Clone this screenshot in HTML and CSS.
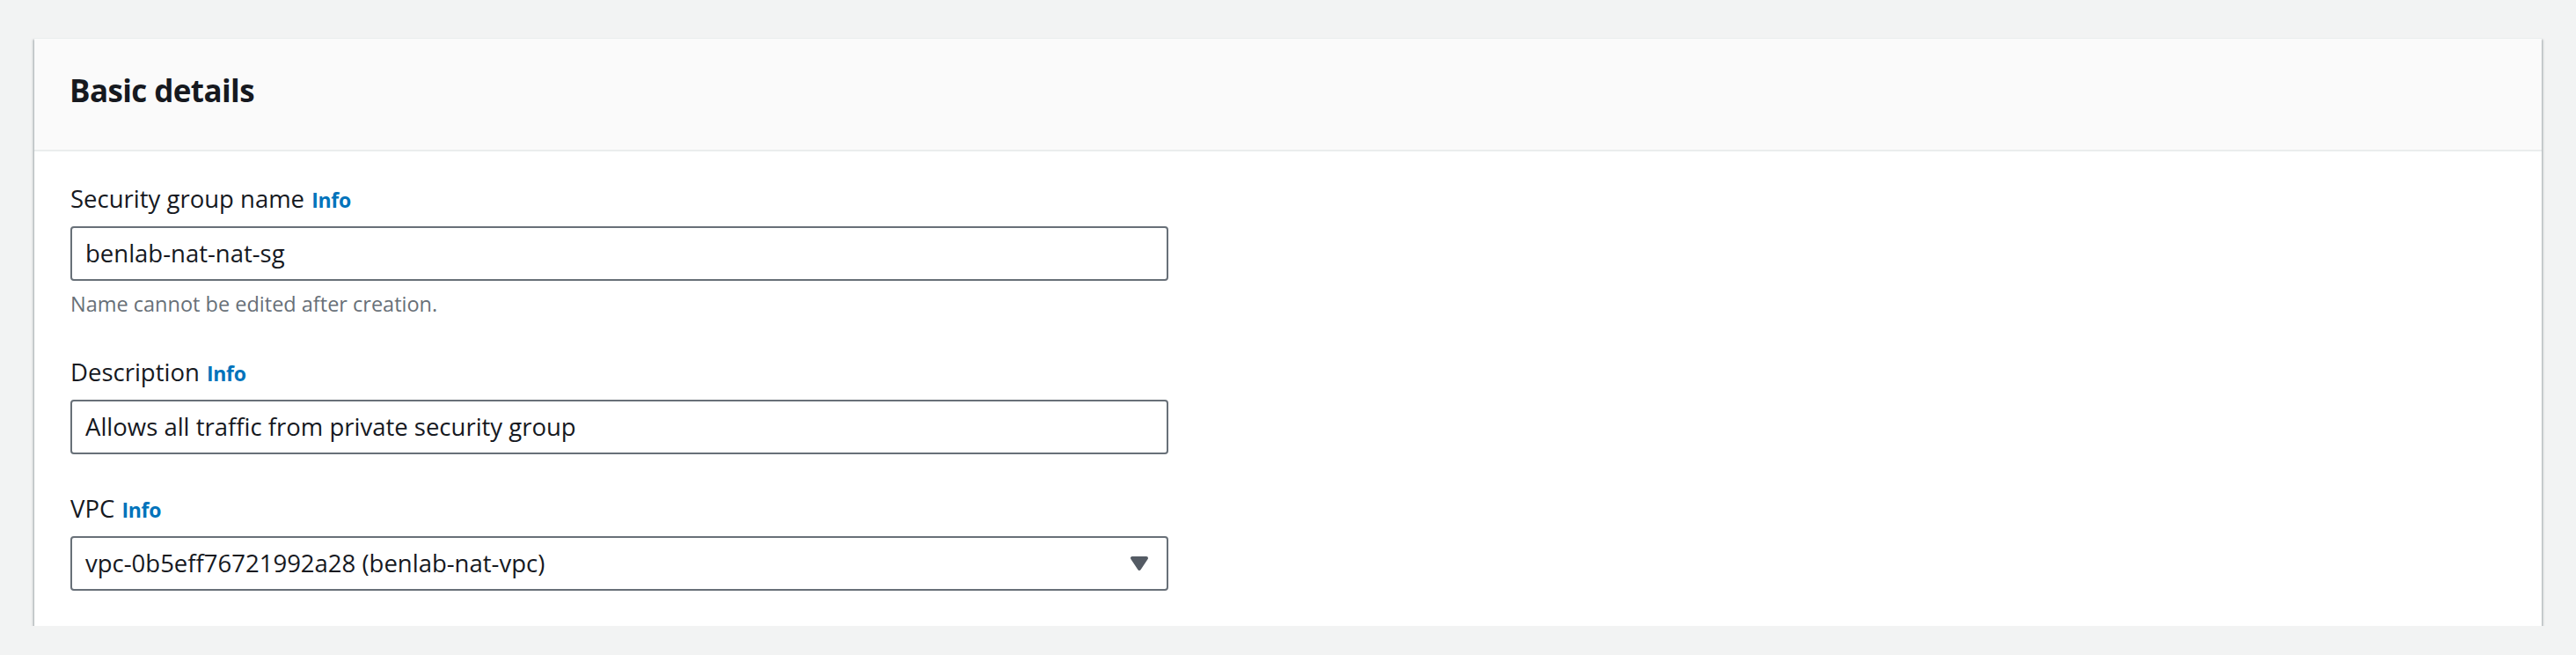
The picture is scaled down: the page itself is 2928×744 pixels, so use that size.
FILE: index.html
```html
<!DOCTYPE html>
<html lang="en">
<head>
<meta charset="utf-8">
<title>Basic details</title>
<link rel="stylesheet" href="styles.css">
</head>
<body>
<div class="page">
  <section class="card">
    <header class="card-header">
      <h2 class="card-title">Basic details</h2>
    </header>
    <div class="card-body">
      <div class="field">
        <div class="label">Security group name <a class="info" href="#">Info</a></div>
        <div class="control">benlab-nat-nat-sg</div>
        <div class="hint">Name cannot be edited after creation.</div>
      </div>
      <div class="field">
        <div class="label">Description <a class="info" href="#">Info</a></div>
        <div class="control">Allows all traffic from private security group</div>
      </div>
      <div class="field">
        <div class="label">VPC <a class="info" href="#">Info</a></div>
        <div class="control select">
          <span class="select-value">vpc-0b5eff76721992a28 (benlab-nat-vpc)</span>
          <svg class="caret" width="32" height="32" viewBox="0 0 16 16" aria-hidden="true"><path d="M4 5h8l-4 6-4-6z" fill="#545b64" stroke="#545b64" stroke-width="2" stroke-linejoin="round"/></svg>
        </div>
      </div>
    </div>
  </section>
</div>
</body>
</html>
```
FILE: styles.css
```css
html, body {
  margin: 0;
  padding: 0;
  background: #f2f3f3;
}
body {
  font-family: "Open Sans", "Noto Sans", sans-serif;
  color: #16191f;
}
.page {
  padding: 43px 39px 0 39px;
}
.card {
  background: #ffffff;
  border-top: 1px solid #eaeded;
  box-shadow: 0 2px 2px 0 rgba(0, 28, 36, 0.35), 2px 2px 2px 0 rgba(0, 28, 36, 0.15), -2px 2px 2px 0 rgba(0, 28, 36, 0.15);
}
.card-header {
  background: #fafafa;
  padding: 37px 40px 45px 40px;
  border-bottom: 2px solid #eaeded;
}
.card-title {
  margin: 0;
  font-size: 35px;
  line-height: 44px;
  font-weight: 700;
  letter-spacing: -0.6px;
  color: #16191f;
}
.card-body {
  padding: 32px 41px 40px 41px;
  display: flex;
  flex-direction: column;
  gap: 40px;
}
.field {
  display: flex;
  flex-direction: column;
  align-items: flex-start;
}
.label {
  font-size: 27.5px;
  line-height: 44px;
  height: 44px;
  margin-bottom: 9px;
  color: #16191f;
}
.info {
  color: #0073bb;
  font-weight: 700;
  font-size: 23px;
  line-height: 1;
  letter-spacing: -0.3px;
  text-decoration: none;
  margin-left: 1px;
}
.control {
  box-sizing: border-box;
  width: 1248px;
  height: 62px;
  border: 2px solid #687078;
  border-radius: 4px;
  padding: 7px 15px;
  font-size: 27.5px;
  line-height: 44px;
  color: #16191f;
  background: #ffffff;
}
.select {
  display: flex;
  align-items: center;
  justify-content: space-between;
  padding-right: 15px;
}
.caret {
  display: block;
  flex: none;
}
.hint {
  margin-top: 10px;
  font-size: 23.5px;
  line-height: 32px;
  color: #687078;
}
```
